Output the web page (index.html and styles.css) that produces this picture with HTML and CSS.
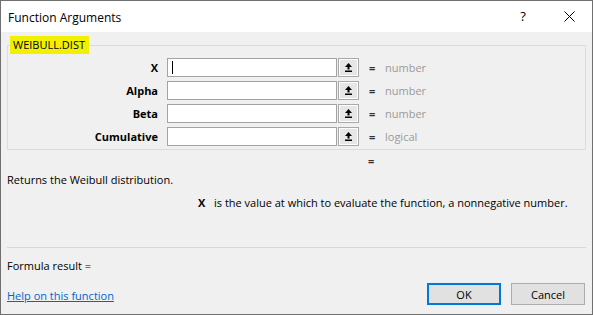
FILE: index.html
```html
<!DOCTYPE html>
<html>
<head>
    <title>Function Arguments</title>
    <link rel="stylesheet" href="styles.css">
</head>
<body>
    <div class="dialog">
        <div class="titlebar">
            <span class="title">Function Arguments</span>
            <span class="caption-btn help-btn">?</span>
            <span class="caption-btn close-btn">
                <svg width="11" height="11" viewBox="0 0 11 11">
                    <path d="M0.5 0.5 L10.5 10.5 M10.5 0.5 L0.5 10.5" stroke="#000" stroke-width="1" fill="none"/>
                </svg>
            </span>
        </div>

        <div class="content">
            <fieldset class="args-box">
                <legend class="fn-name">WEIBULL.DIST</legend>

                <div class="arg-row">
                    <label class="arg-label">X</label>
                    <div class="arg-input"><span class="caret"></span></div>
                    <button class="ref-btn">
                        <svg width="7" height="9" viewBox="0 0 7 9"><path d="M3.5 0 L7 4 L0 4 Z M2.5 4 H4.5 V6.5 H2.5 Z M0 7.5 H7 V9 H0 Z" fill="#000"/></svg>
                    </button>
                    <span class="eq">=</span>
                    <span class="arg-type">number</span>
                </div>

                <div class="arg-row">
                    <label class="arg-label">Alpha</label>
                    <div class="arg-input"></div>
                    <button class="ref-btn">
                        <svg width="7" height="9" viewBox="0 0 7 9"><path d="M3.5 0 L7 4 L0 4 Z M2.5 4 H4.5 V6.5 H2.5 Z M0 7.5 H7 V9 H0 Z" fill="#000"/></svg>
                    </button>
                    <span class="eq">=</span>
                    <span class="arg-type">number</span>
                </div>

                <div class="arg-row">
                    <label class="arg-label">Beta</label>
                    <div class="arg-input"></div>
                    <button class="ref-btn">
                        <svg width="7" height="9" viewBox="0 0 7 9"><path d="M3.5 0 L7 4 L0 4 Z M2.5 4 H4.5 V6.5 H2.5 Z M0 7.5 H7 V9 H0 Z" fill="#000"/></svg>
                    </button>
                    <span class="eq">=</span>
                    <span class="arg-type">number</span>
                </div>

                <div class="arg-row">
                    <label class="arg-label">Cumulative</label>
                    <div class="arg-input"></div>
                    <button class="ref-btn">
                        <svg width="7" height="9" viewBox="0 0 7 9"><path d="M3.5 0 L7 4 L0 4 Z M2.5 4 H4.5 V6.5 H2.5 Z M0 7.5 H7 V9 H0 Z" fill="#000"/></svg>
                    </button>
                    <span class="eq">=</span>
                    <span class="arg-type">logical</span>
                </div>
            </fieldset>

            <div class="result-eq">=</div>

            <div class="fn-desc">Returns the Weibull distribution.</div>

            <div class="arg-desc">
                <b class="arg-name">X</b>
                <span>is the value at which to evaluate the function, a nonnegative number.</span>
            </div>

            <hr class="separator">

            <div class="formula-result">Formula result =</div>

            <div class="footer">
                <a href="#" class="help-link">Help on this function</a>
                <div class="buttons">
                    <button class="dlg-btn default-btn">OK</button>
                    <button class="dlg-btn">Cancel</button>
                </div>
            </div>
        </div>
    </div>
</body>
</html>
```

FILE: styles.css
```css
body {
    margin: 0;
    font-family: "Open Sans", "Noto Sans", sans-serif;
    font-size: 11px;
    color: #000;
    background-color: #f0f0f0;
}

.dialog {
    width: 593px;
    height: 315px;
    box-sizing: border-box;
    border: 1px solid #707070;
    background-color: #f0f0f0;
    display: flex;
    flex-direction: column;
}

/* title bar */

.titlebar {
    height: 31px;
    background-color: #fff;
    display: flex;
    align-items: center;
}

.title {
    flex: 1;
    padding-left: 7px;
    font-size: 12px;
    padding-top: 1px;
}

.caption-btn {
    width: 46px;
    height: 31px;
    display: flex;
    align-items: center;
    justify-content: center;
}

.help-btn {
    font-size: 13px;
    padding-bottom: 1px;
    box-sizing: border-box;
}

.close-btn svg {
    display: block;
    margin-top: -1px;
}

/* content */

.content {
    padding: 0 6px;
}

.args-box {
    margin: 4px 0 0 0;
    padding: 4px 0 3px 0;
    border: 1px solid #dcdcdc;
    min-width: 0;
}

.fn-name {
    margin-left: 2px;
    padding: 0 4px 0 3px;
    line-height: 18px;
    background-color: #f0f000;
    font-size: 11px;
}

.arg-row {
    display: flex;
    align-items: center;
    height: 19px;
    margin-bottom: 4px;
}

.arg-row:last-child {
    margin-bottom: 0;
}

.arg-label {
    width: 150px;
    text-align: right;
    font-weight: bold;
    margin-right: 9px;
}

.arg-input {
    width: 170px;
    height: 19px;
    box-sizing: border-box;
    border: 1px solid #a3a3a3;
    background-color: #fff;
    display: flex;
    align-items: center;
    padding-left: 4px;
}

.caret {
    width: 1px;
    height: 13px;
    background-color: #000;
}

.ref-btn {
    width: 21px;
    height: 19px;
    margin-left: 1px;
    padding: 0;
    box-sizing: border-box;
    border: 1px solid #a9a9a9;
    box-shadow: inset 0 0 0 1px #fdfdfd;
    background-color: #e6e6e6;
    display: flex;
    align-items: center;
    justify-content: center;
}

.ref-btn svg {
    display: block;
}

.eq {
    margin-left: 10px;
    width: 6px;
    font-weight: bold;
    color: #333;
}

.arg-type {
    margin-left: 10px;
    color: #9a9a9a;
}

.result-eq {
    padding-left: 361px;
    margin-top: 3px;
    line-height: 16px;
    font-weight: bold;
    color: #333;
}

.fn-desc {
    margin-top: 3px;
    line-height: 16px;
}

.arg-desc {
    margin-top: 7px;
    padding-left: 191px;
    line-height: 16px;
    display: flex;
}

.arg-name {
    width: 16px;
}

.separator {
    margin: 36px 0 0 0;
    border: none;
    border-top: 1px solid #d8d8d8;
    height: 0;
}

.formula-result {
    margin-top: 10px;
    line-height: 16px;
}

.footer {
    margin-top: 9px;
    display: flex;
    align-items: center;
    justify-content: space-between;
    padding-right: 1px;
}

.help-link {
    color: #0066cc;
    text-decoration: underline;
    margin-top: 2px;
}

.buttons {
    display: flex;
    gap: 10px;
}

.dlg-btn {
    width: 74px;
    height: 22px;
    box-sizing: border-box;
    border: 1px solid #adadad;
    background-color: #e1e1e1;
    font-family: "Open Sans", "Noto Sans", sans-serif;
    font-size: 11px;
    color: #000;
    padding: 0;
}

.default-btn {
    border: 2px solid #0078d7;
}
```
